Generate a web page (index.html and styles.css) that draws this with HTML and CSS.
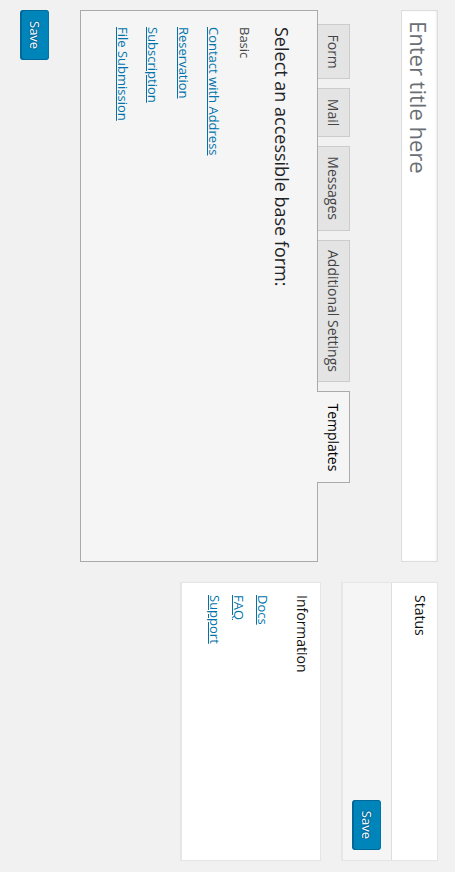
FILE: index.html
```html
<!DOCTYPE html>
<html lang="en">
<head>
<meta charset="utf-8">
<title>Edit Contact Form</title>
<link rel="stylesheet" href="styles.css">
</head>
<body>
<div class="screen">
<div class="page">
  <div class="wrap">
    <div class="main">
      <input class="title-input" type="text" placeholder="Enter title here">
      <div class="tabs">
        <span class="tab">Form</span>
        <span class="tab">Mail</span>
        <span class="tab">Messages</span>
        <span class="tab">Additional Settings</span>
        <span class="tab active">Templates</span>
      </div>
      <div class="panel">
        <h3 class="panel-title">Select an accessible base form:</h3>
        <ul class="tpl-list">
          <li class="current">Basic</li>
          <li><a href="#">Contact with Address</a></li>
          <li><a href="#">Reservation</a></li>
          <li><a href="#">Subscription</a></li>
          <li><a href="#">File Submission</a></li>
        </ul>
      </div>
      <div class="bottom-actions">
        <button class="btn-primary" type="button">Save</button>
      </div>
    </div>
    <div class="side">
      <div class="postbox status-box">
        <h3 class="hndle status-hndle">Status</h3>
        <div class="publish-actions">
          <button class="btn-primary" type="button">Save</button>
        </div>
      </div>
      <div class="postbox info-box">
        <h3 class="hndle">Information</h3>
        <ul class="info-list">
          <li><a href="#">Docs</a></li>
          <li><a href="#">FAQ</a></li>
          <li><a href="#">Support</a></li>
        </ul>
      </div>
    </div>
  </div>
</div>
</div>
</body>
</html>
```
FILE: styles.css
```css
html {
  overflow: hidden;
}

html, body {
  margin: 0;
  padding: 0;
  background: #f1f1f1;
}

.screen {
  width: 455px;
  height: 872px;
  overflow: hidden;
}

.page {
  width: 872px;
  height: 455px;
  transform-origin: 0 0;
  transform: translateX(455px) rotate(90deg);
  background: #f1f1f1;
  font-family: "Open Sans", "DejaVu Sans", sans-serif;
  font-size: 13px;
  color: #444;
}

.wrap {
  display: flex;
  gap: 20px;
  padding: 17px 11px 0 10px;
}

.main {
  flex: 1;
  min-width: 0;
}

.side {
  width: 279px;
  flex: none;
}

.title-input {
  display: block;
  width: 100%;
  box-sizing: border-box;
  height: 37px;
  margin: 0;
  padding: 0 10px;
  border: 1px solid #ddd;
  background: #fff;
  box-shadow: inset 0 1px 2px rgba(0, 0, 0, 0.07);
  font-family: "Open Sans", "DejaVu Sans", sans-serif;
  font-size: 22px;
  color: #32373c;
  outline: none;
}

.title-input::placeholder {
  color: #6b6f74;
}

.tabs {
  display: flex;
  align-items: flex-end;
  gap: 9px;
  margin: 51px 0 0 14px;
}

.tab {
  display: block;
  height: 31px;
  line-height: 31px;
  padding: 0 9.5px;
  border: 1px solid #ccc;
  border-bottom: 0;
  background: #e4e4e4;
  font-size: 14px;
  color: #444;
}

.tab.active {
  position: relative;
  z-index: 1;
  height: 32px;
  margin-bottom: -1px;
  padding: 0 11px;
  border-color: #aaa;
  background: #f5f5f5;
  color: #000;
}

.panel {
  box-sizing: border-box;
  height: 238px;
  border: 1px solid #aaa;
  background: #f5f5f5;
  padding: 22px 16px;
}

.panel-title {
  margin: 0;
  font-size: 18px;
  line-height: 26px;
  font-weight: 400;
  color: #1d2327;
}

.tpl-list {
  list-style: none;
  margin: 9px 0 0;
  padding: 0;
}

.tpl-list li {
  line-height: 30.5px;
  font-size: 13px;
}

.tpl-list li.current {
  color: #444;
}

a {
  color: #0073aa;
  text-decoration: underline;
}

.bottom-actions {
  margin-top: 31px;
}

.btn-primary {
  display: inline-block;
  box-sizing: border-box;
  height: 28px;
  margin: 0;
  padding: 0 10px;
  line-height: 26px;
  font-family: "Open Sans", "DejaVu Sans", sans-serif;
  font-size: 13px;
  color: #fff;
  background: #0085ba;
  border: 1px solid #0073aa;
  border-color: #0073aa #006799 #006799;
  border-radius: 3px;
  box-shadow: 0 1px 0 #006799;
  text-shadow: 0 -1px 1px #006799, 1px 0 1px #006799, 0 1px 1px #006799, -1px 0 1px #006799;
  cursor: pointer;
}

.postbox {
  box-sizing: border-box;
  border: 1px solid #e5e5e5;
  background: #fff;
  box-shadow: 0 1px 1px rgba(0, 0, 0, 0.04);
}

.status-box {
  margin-bottom: 21px;
}

.hndle {
  margin: 0;
  padding: 8px 12px;
  font-size: 14px;
  line-height: 1.4;
  font-weight: 400;
  color: #111;
}

.status-hndle {
  box-sizing: border-box;
  height: 45px;
  padding-top: 7px;
}

.publish-actions {
  border-top: 1px solid #ddd;
  background: #f5f5f5;
  padding: 10px;
  text-align: right;
  line-height: 0;
}

.info-box {
  height: 140px;
}

.info-list {
  list-style: none;
  margin: 9px 12px 0;
  padding: 0;
}

.info-list li {
  line-height: 24px;
}
```
